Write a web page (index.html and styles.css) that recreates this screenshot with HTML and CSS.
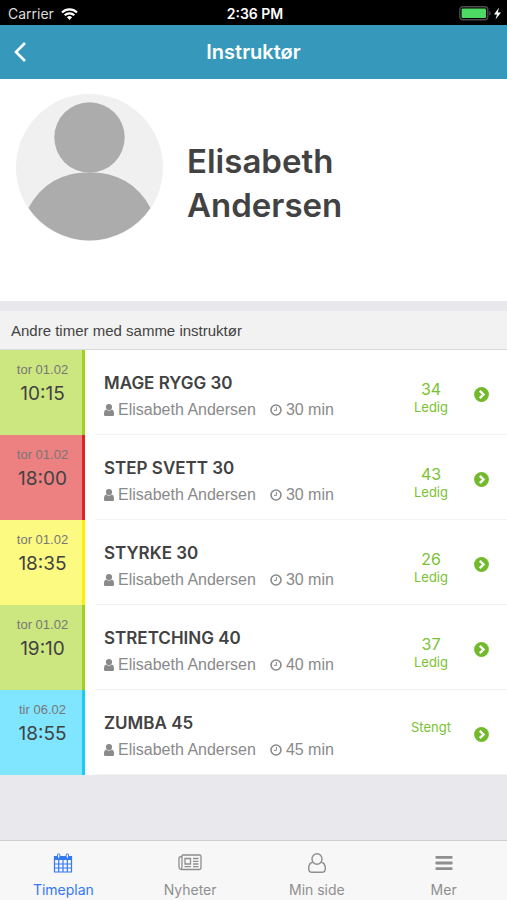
FILE: index.html
```html
<!DOCTYPE html>
<html lang="no">
<head>
<meta charset="utf-8">
<meta name="viewport" content="width=device-width, initial-scale=1">
<title>Instruktør</title>
<link rel="stylesheet" href="styles.css">
</head>
<body>
<svg class="defs" aria-hidden="true">
  <symbol id="person" viewBox="0 0 10 12"><circle cx="5" cy="3.100" r="3.100"/><path d="M0 9.500C0 7.200.8 5.900 2.300 5.500a4 4 0 0 0 5.400 0C9.200 5.900 10 7.200 10 9.500v.9c0 1-.6 1.600-1.500 1.600h-7C.6 12 0 11.400 0 10.400z"/></symbol>
  <symbol id="clock" viewBox="0 0 12 12"><circle cx="6" cy="6" r="5" fill="none" stroke="currentColor" stroke-width="1.600"/><path d="M6.400 3v3.400H4" fill="none" stroke="currentColor" stroke-width="1"/></symbol>
  <symbol id="go" viewBox="0 0 15 15"><circle cx="7.500" cy="7.500" r="7.400"/><path d="M5.800 3.800l3.700 3.700-3.700 3.700" fill="none" stroke="#fff" stroke-width="2.400"/></symbol>
</svg>
<div class="status">
  <div class="carrier"><span>Carrier</span>
    <svg width="17" height="12" viewBox="0 0 17 12" fill="none" stroke="#fff" stroke-width="2.200"><path d="M1 4.500a10.600 10.600 0 0 1 15 0M3.700 7.300a6.800 6.800 0 0 1 9.600 0"/><path d="M8.500 12L5.900 9.300a3.700 3.700 0 0 1 5.200 0z" fill="#fff" stroke="none"/></svg>
  </div>
  <div class="clock">2:36 PM</div>
  <div class="battery">
    <svg width="43" height="15" viewBox="0 0 43 15"><rect x=".8" y=".8" width="28" height="13" rx="3" fill="none" stroke="#4b4b4e" stroke-width="1.400"/><rect x="2.600" y="2.600" width="24.400" height="9.400" rx="1" fill="#4cd964"/><path d="M30.200 5.200c2 .6 2 3.800 0 4.400z" fill="#4b4b4e"/><path d="M40 1.500l-5 7h3L36.500 13.500l5.500-7h-3.200z" fill="#fff"/></svg>
  </div>
</div>
<header class="nav">
  <button class="back" aria-label="Tilbake"><svg width="12" height="20" viewBox="0 0 12 20" fill="none" stroke="#fff" stroke-width="2.600"><path d="M11 1L2 10l9 9"/></svg></button>
  <h1>Instruktør</h1>
</header>
<main>
  <section class="profile">
    <svg class="avatar" viewBox="0 0 147 147" aria-hidden="true"><circle cx="73.500" cy="73.500" r="73.500" fill="#f0f0f0"/><circle cx="73.500" cy="43.500" r="35.200" fill="#acacac"/><path d="M12.500 114A64 64 0 0 1 73.500 78.500A64 64 0 0 1 134.500 114A73.500 73.500 0 0 1 12.500 114z" fill="#acacac"/></svg>
    <h2>Elisabeth Andersen</h2>
  </section>
  <h3 class="section">Andre timer med samme instruktør</h3>
  <ul class="list">
    <li><a href="#" class="row">
      <div class="when green"><span>tor 01.02</span><strong>10:15</strong></div>
      <div class="body"><div class="info"><div class="title">MAGE RYGG 30</div><div class="meta"><svg class="person"><use href="#person"/></svg><span class="who">Elisabeth Andersen</span><svg class="time"><use href="#clock"/></svg><span>30 min</span></div></div>
      <div class="spots"><b>34</b><span>Ledig</span></div><svg class="go"><use href="#go"/></svg></div></a></li>
    <li><a href="#" class="row">
      <div class="when red"><span>tor 01.02</span><strong>18:00</strong></div>
      <div class="body"><div class="info"><div class="title">STEP SVETT 30</div><div class="meta"><svg class="person"><use href="#person"/></svg><span class="who">Elisabeth Andersen</span><svg class="time"><use href="#clock"/></svg><span>30 min</span></div></div>
      <div class="spots"><b>43</b><span>Ledig</span></div><svg class="go"><use href="#go"/></svg></div></a></li>
    <li><a href="#" class="row">
      <div class="when yellow"><span>tor 01.02</span><strong>18:35</strong></div>
      <div class="body"><div class="info"><div class="title">STYRKE 30</div><div class="meta"><svg class="person"><use href="#person"/></svg><span class="who">Elisabeth Andersen</span><svg class="time"><use href="#clock"/></svg><span>30 min</span></div></div>
      <div class="spots"><b>26</b><span>Ledig</span></div><svg class="go"><use href="#go"/></svg></div></a></li>
    <li><a href="#" class="row">
      <div class="when green"><span>tor 01.02</span><strong>19:10</strong></div>
      <div class="body"><div class="info"><div class="title">STRETCHING 40</div><div class="meta"><svg class="person"><use href="#person"/></svg><span class="who">Elisabeth Andersen</span><svg class="time"><use href="#clock"/></svg><span>40 min</span></div></div>
      <div class="spots"><b>37</b><span>Ledig</span></div><svg class="go"><use href="#go"/></svg></div></a></li>
    <li><a href="#" class="row">
      <div class="when blue"><span>tir 06.02</span><strong>18:55</strong></div>
      <div class="body"><div class="info"><div class="title">ZUMBA 45</div><div class="meta"><svg class="person"><use href="#person"/></svg><span class="who">Elisabeth Andersen</span><svg class="time"><use href="#clock"/></svg><span>45 min</span></div></div>
      <div class="spots"><span>Stengt</span></div><svg class="go"><use href="#go"/></svg></div></a></li>
  </ul>
</main>
<nav class="tabs">
  <a href="#" class="active"><svg width="20" height="20" viewBox="0 0 20 20" fill="none" stroke="currentColor"><path d="M1.500 3.500h17v15.500h-17zM1.500 11h17M1.500 15h17M5.700 7v12M10 7v12M14.300 7v12" stroke-width="1.200"/><path d="M1 3h18v4H1z" fill="currentColor" stroke="none"/><rect x="4.500" y=".8" width="2.400" height="4.400" rx="1.200" fill="#f7f7f7"/><rect x="13.100" y=".8" width="2.400" height="4.400" rx="1.200" fill="#f7f7f7"/></svg><span>Timeplan</span></a>
  <a href="#"><svg width="24" height="20" viewBox="0 0 24 20" fill="none" stroke="currentColor" stroke-width="1.300"><path d="M4 2h17.500q1.500 0 1.500 1.500v11q0 2-2 2H3.500Q1 16.500 1 14V5Q1 3.700 3.800 3.500M4 2V14q0 1.500-1.200 1.500"/><path d="M7 5.500h5.500V11H7zM15 5.500h5.500M15 8.300h5.500M15 11h5.500M6.500 13.700h6.500M15 13.700h5.500"/></svg><span>Nyheter</span></a>
  <a href="#"><svg width="20" height="20" viewBox="0 0 20 20" fill="none" stroke="currentColor" stroke-width="1.400"><ellipse cx="10" cy="6" rx="5" ry="5.300"/><path d="M5.800 9.300C3 9.700 1.700 12.500 1.700 15.500c0 2.400 1.200 3.800 3.300 3.800h10c2.100 0 3.300-1.400 3.300-3.800 0-3-1.300-5.800-4.100-6.200"/></svg><span>Min side</span></a>
  <a href="#"><svg width="18" height="20" viewBox="0 0 18 20" fill="currentColor"><rect x=".5" y="3" width="17" height="2.800" rx=".7"/><rect x=".5" y="8.600" width="17" height="2.800" rx=".7"/><rect x=".5" y="14.200" width="17" height="2.800" rx=".7"/></svg><span>Mer</span></a>
</nav>
</body>
</html>
```
FILE: styles.css
```css
* { box-sizing: border-box; }
body {
  margin: 0;
  min-height: 100vh;
  display: flex;
  flex-direction: column;
  background: #e8e8ed;
  color: #424242;
  font-family: Inter, "Liberation Sans", sans-serif;
}
h1, h2, h3, ul { margin: 0; padding: 0; }
ul { list-style: none; }
a { color: inherit; text-decoration: none; }
svg { display: block; flex: none; }
.defs { position: absolute; width: 0; height: 0; }

.status {
  display: grid;
  grid-template-columns: 1fr auto 1fr;
  align-items: center;
  height: 25px;
  padding: 2px 5px 0 8px;
  background: #000;
  color: #fff;
  font-size: 14px;
}
.carrier { display: flex; align-items: center; gap: 7px; color: #ddd; }
.clock { font-weight: 600; }
.battery { justify-self: end; }

.nav {
  display: grid;
  grid-template-columns: 40px 1fr 40px;
  align-items: center;
  height: 54px;
  background: #3699bb;
  color: #fff;
}
.nav h1 { font-size: 20px; font-weight: 600; text-align: center; }
.back { border: 0; padding: 0 14px; background: none; }

.profile {
  display: flex;
  gap: 24px;
  height: 222px;
  padding: 15px 16px;
  background: #fff;
}
.avatar { width: 147px; height: 147px; }
.profile h2 {
  flex: 1;
  margin-top: 45px;
  max-width: 240px;
  font-size: 33px;
  line-height: 44px;
  font-weight: 600;
}

.section {
  height: 39px;
  margin-top: 10px;
  padding: 0 11px;
  border-bottom: 1px solid #d9d9d9;
  background: #f2f2f2;
  font-family: "Liberation Sans", sans-serif;
  font-size: 15px;
  line-height: 40px;
  font-weight: 400;
}
.row { display: flex; height: 85px; background: #fff; }
.when {
  display: flex;
  flex-direction: column;
  width: 85px;
  padding: 11px 0 0 3px;
  border-right: 3px solid;
  text-align: center;
}
.when span {
  font-family: "Liberation Sans", sans-serif;
  font-size: 13px;
  line-height: 18px;
  color: #777;
}
.when strong { font-size: 19px; line-height: 29px; font-weight: 400; }
.green { background: #cce680; border-color: #9fd022; }
.red { background: #ed8080; border-color: #dc2424; }
.yellow { background: #fcfa80; border-color: #fbf000; }
.blue { background: #80e5ff; border-color: #19ccf8; }
.body {
  display: flex;
  flex: 1;
  margin-left: 10px;
  padding-left: 9px;
  border-bottom: 1px solid #f3f3f3;
}
.info { flex: 1; padding-top: 20px; }
.title { font-size: 17px; line-height: 26px; font-weight: 600; }
.meta {
  display: flex;
  align-items: center;
  font-family: "Liberation Sans", sans-serif;
  font-size: 16px;
  line-height: 28px;
  color: #8a8a8a;
}
.person { width: 10px; height: 12px; margin-right: 4px; fill: currentColor; }
.time { width: 12px; height: 12px; margin: 0 4px 0 14px; }
.who { white-space: nowrap; }
.spots {
  display: flex;
  flex-direction: column;
  width: 86px;
  padding-top: 29px;
  color: #7ac231;
  text-align: center;
}
.spots b { font-size: 16px; line-height: 20px; font-weight: 400; }
.spots span { font-size: 13px; line-height: 16px; }
.go { width: 15px; height: 15px; margin: 37px 18px 0 0; fill: #72b92c; }

.tabs {
  display: grid;
  grid-template-columns: repeat(4, 1fr);
  height: 60px;
  margin-top: auto;
  border-top: 1px solid #cfcfd4;
  background: #f7f7f7;
  color: #8f8f8f;
}
.tabs a { display: flex; flex-direction: column; align-items: center; gap: 7px; padding-top: 12px; }
.tabs span { font-size: 14px; line-height: 20px; }
.tabs .active { color: #3478f6; }
```
